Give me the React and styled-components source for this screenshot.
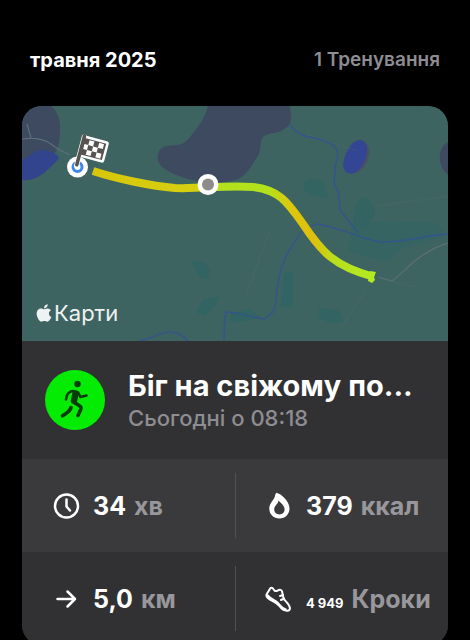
import styled, { createGlobalStyle } from 'styled-components';
import { FaApple } from 'react-icons/fa';

const GlobalStyle = createGlobalStyle`
    * {
        box-sizing: border-box;
    }
    body {
        margin: 0;
        background: #000;
        color: #fff;
        font-family: 'Inter', sans-serif;
        scrollbar-width: none;
    }
`;

const ClockIcon = () => (
    <Icon viewBox="0 0 28 28">
        <circle cx="14.5" cy="14" r="11.5" />
        <path d="M14.500 7.500v7l3.500 4" />
    </Icon>
);

const DropIcon = () => (
    <Icon viewBox="0 0 28 28">
        <path
            fill="#fff"
            fillRule="evenodd"
            stroke="none"
            d="M11.5.8C16 1.800 24.500 9 24.500 16.500 24.500 22.500 20 26.500 14.400 26.500S4.300 22.500 4.300 16.800C4.300 12 7.300 9.500 9 6.500c1.200-2 1-4.500 2.500-5.700ZM13.500 8.500c0 3-4.300 5.200-4.300 8.800 0 3 2.100 5.200 5.200 5.200s5.200-2.200 5.200-5.200C19.600 13.500 16 11.500 13.500 8.500Z"
        />
    </Icon>
);

const ArrowIcon = () => (
    <Icon viewBox="0 0 28 28">
        <path d="M5.5 14H23M15.5 6.5 23 14l-7.5 7.500" />
    </Icon>
);

const ShoeIcon = () => (
    <Icon viewBox="0 0 28 28">
        <path
            strokeWidth="2"
            d="M5.500 3c1.500-1 2.500.3 3.500 2 .8 1.300 2.300 1.300 4 .3 1.700-1 3.500-.5 4 1l1.200 5.500c.5 3.500 3.600 4.800 5.400 8 2 3.500 1.700 5.700-.9 5.900-3.700.3-6-1.400-8-4.400-2.200-3.300-5-4.300-9-6.300-3.500-1.700-4.700-3.300-4.200-5.500Z"
        />
        <path strokeWidth="2.5" d="M2.500 10.500c2 3 6 4 9 6.500s4.500 6.500 9 7.500" />
        <path strokeWidth="2" d="M18 10l-3 1M19 13.500 16 15" />
    </Icon>
);

const RunIcon = () => (
    <RunSvg viewBox="0 0 60 60">
        <circle cx="32.5" cy="14" r="3.2" fill="#063d06" stroke="none" />
        <path strokeWidth="2.6" d="M29 21c-4 0-7.500 2.500-8 8.500" />
        <path strokeWidth="6.4" d="M30.500 23.500 29 31" />
        <path strokeWidth="2.6" d="m33 22.500 2.500 4.500 6-1.500" />
        <path strokeWidth="3.6" d="m29.500 32.500 6 4c1 1 .8 2-2.500 9" />
        <path strokeWidth="3.6" d="M26 37.500c-1 4-3 4.500-8.500 8.200" />
    </RunSvg>
);

const RouteMap = () => (
    <MapSvg viewBox="0 0 426 235" preserveAspectRatio="xMidYMid slice">
        <defs>
            <linearGradient id="route" gradientUnits="userSpaceOnUse" x1="71" y1="0" x2="353" y2="0">
                <stop offset="0" stopColor="#d8c60a" />
                <stop offset="0.36" stopColor="#d6d010" />
                <stop offset="0.45" stopColor="#b4e01c" />
                <stop offset="0.62" stopColor="#b2e21c" />
                <stop offset="0.7" stopColor="#dcc80c" />
                <stop offset="0.78" stopColor="#dfbf0c" />
                <stop offset="0.86" stopColor="#b8e01c" />
                <stop offset="1" stopColor="#b4ea22" />
            </linearGradient>
        </defs>
        <rect width="426" height="235" fill="#3e6461" />

        {/* parks */}
        <g fill="#3d4a60">
            <path d="M0 0h29c6 5 9 12 9 22 0 12-1 20-6 26L0 58Z" />
            <path d="M186 0c-3 12-9 20-15 27-5 7-8 11-16 12-9 1-17 0-19 9-2 10 5 15 16 20 18 8 45 12 64 5 10-5 13-13 20-23 4-7 1-16 6-20 7-4 15-2 20-7 9-4 7-14 6-23Z" />
            <path d="M426 36c-7 4-9 12-8 19 1 6 4 11 8 14Z" />
        </g>
        <g fill="#316462">
            <path d="M284 74c8-3 17-1 19 4l4 15-18-4c-7-3-10-9-5-15Z" opacity=".7" />
            <path d="M339 92c9-3 13 7 14 17l-10 13-12-5c0-9 2-19 8-25Z" opacity=".7" />
            <path d="M330 118l36-3 50 2 8 13-45 13-13 13-40-10Z" opacity=".6" />
            <path d="M262 166h9v35h-12ZM297 202l21 3 4 11-14 1-12-6ZM169 156l12-1 7 9-2 9-9-2ZM182 193l16-3-5 10-11 10-8-4Z" />
            <path d="M208 208l20-5 10 9-20 4h-10Z" />
        </g>

        {/* lakes and rivers */}
        <path fill="#32448e" d="M0 54c7-2 11-9 18-10 9 0 17 3 19 8-5 7-10 10-15 15-7 5-14 8-22 7Z" />
        <path fill="#4b4f65" d="M335 34c9 0 13 6 12 14-1 12-9 19-18 20l-4-2Z" />
        <path fill="#324694" d="M334 35c7-3 11 2 11 8 0 9-6 22-13 24-6 2-10-1-11-8 1-9 6-21 13-24Z" />
        <g fill="none" stroke="#34558b" strokeWidth="1.5">
            <path d="M268 19c4 5 9 9 15 11 11 3 28 4 32 14 3 8-2 10-2 19 0 7-2 13 0 17 8 11 2 19 6 25l17 22" />
            <path d="M426 128c-22 1-42 8-65 8-19-1-42-15-66-18-9 2-15 6-20 14-5 9-9 12-13 23-6 13-7 28-8 40-1 9-3 13-12 18-10-1-22-6-38-7-2 11-2 19-2 29" />
            <path d="M118 235c14-3 20-9 30-9 9 0 13 4 18 9" />
        </g>

        {/* roads */}
        <g fill="none" stroke="#5c6f78" strokeWidth="1.2">
            <path d="M0 33c14-2 22 0 29 5 6 5 12 8 19 11M5 18l4 14M356 171l14 4c14-10 26-29 56-38" />
            <path d="M248 125l-25 66M344 184l-23 35M284 28l52 17M371 176l23 5M356 100l70-10" opacity=".25" />
        </g>

        <path
            d="M71 65c24 8 59 15 82 17 26 1 50-3 78-1 27 3 35 16 50 37 18 27 30 42 71 53"
            fill="none"
            stroke="url(#route)"
            strokeWidth="8"
        />
        <path fill="#b4ea22" d="m348 165 6 1-2 5 1 3-3 3-4-2Z" />
        <circle cx="186" cy="78.5" r="10.5" fill="#fff" />
        <circle cx="186" cy="78.5" r="6" fill="#8d8c8a" />

        {/* finish flag */}
        <circle cx="55.5" cy="61" r="10.5" fill="#fff" />
        <circle cx="55.5" cy="61" r="4.5" fill="#fff" stroke="#3d88e8" strokeWidth="3" />
        <g transform="translate(63 32) rotate(15)">
            <path
                d="M-1-1v30M0 0h22v17H0Z"
                fill="#fff"
                stroke="#fff"
                strokeWidth="5"
                strokeLinejoin="round"
                strokeLinecap="round"
            />
            <path d="M0 0h22v17H0Z" fill="#565351" />
            <path fill="#fff" d="M5 1h5v5H5zM15 1h5v5h-5zM1 6h4v5H1zM10 6h5v5h-5zM5 11h5v5H5zM15 11h5v5h-5z" />
            <path d="M-1-2v30" stroke="#565351" strokeWidth="3.5" strokeLinecap="round" />
        </g>
    </MapSvg>
);

const stats = [
    [
        { icon: <ClockIcon />, value: '34', unit: 'хв' },
        { icon: <DropIcon />, value: '379', unit: 'ккал' },
    ],
    [
        { icon: <ArrowIcon />, value: '5,0', unit: 'км' },
        { icon: <ShoeIcon />, value: '4 949', unit: 'Кроки', small: true },
    ],
];

export default function App() {
    return (
        <>
            <GlobalStyle />
            <Page>
                <MonthBar>
                    <Month>травня 2025</Month>
                    <Count>1 Тренування</Count>
                </MonthBar>
                <Card>
                    <MapWrapp>
                        <RouteMap />
                        <MapBrand>
                            <FaApple size={20} />
                            Карти
                        </MapBrand>
                    </MapWrapp>
                    <Workout>
                        <RunIcon />
                        <WorkoutInfo>
                            <Title>Біг на свіжому по...</Title>
                            <Time>Сьогодні о 08:18</Time>
                        </WorkoutInfo>
                    </Workout>
                    {stats.map((row, index) => (
                        <StatRow key={index} $light={index % 2 === 0}>
                            {row.map((item) => (
                                <Stat key={item.unit}>
                                    {item.icon}
                                    <StatText>
                                        <Value $small={item.small}>{item.value}</Value>
                                        <Unit>{item.unit}</Unit>
                                    </StatText>
                                </Stat>
                            ))}
                        </StatRow>
                    ))}
                </Card>
            </Page>
        </>
    );
}

const Page = styled.main`
    padding: 48px 22px 0;
`;
const MonthBar = styled.header`
    display: flex;
    justify-content: space-between;
    padding: 0 8px;
    height: 58px;
    line-height: 24px;
`;
const Month = styled.h1`
    margin: 0;
    font-size: 20px;
    font-weight: 700;
`;
const Count = styled.span`
    color: #8e8d92;
    font-size: 19px;
    font-weight: 600;
`;
const Card = styled.section`
    border-radius: 20px;
    overflow: hidden;
    background: #313133;
`;
const MapWrapp = styled.div`
    position: relative;
`;
const MapSvg = styled.svg`
    display: block;
    width: 100%;
`;
const MapBrand = styled.div`
    position: absolute;
    left: 12px;
    bottom: 14px;
    display: flex;
    align-items: center;
    color: #eef2f2;
    font-size: 22px;
    line-height: 28px;
`;
const Workout = styled.div`
    display: flex;
    align-items: center;
    gap: 23px;
    height: 118px;
    padding: 0 23px;
`;
const RunSvg = styled.svg`
    flex: none;
    width: 60px;
    height: 60px;
    border-radius: 50%;
    background: #04ec04;
    fill: none;
    stroke: #063d06;
    stroke-linecap: round;
    stroke-linejoin: round;
`;
const WorkoutInfo = styled.div`
    min-width: 0;
`;
const Title = styled.h2`
    margin: 0;
    font-size: 29px;
    line-height: 36px;
    font-weight: 700;
    white-space: nowrap;
`;
const Time = styled.p`
    margin: 0;
    color: #8e8d92;
    font-size: 22px;
    line-height: 28px;
    font-weight: 500;
`;
const StatRow = styled.div`
    display: grid;
    grid-template-columns: 1fr 1fr;
    height: 93px;
    padding: 14px 0;
    background: ${(props) => (props.$light ? '#3a3a3c' : '#313133')};
`;
const Stat = styled.div`
    display: flex;
    align-items: center;
    gap: 13px;
    min-width: 0;
    padding-left: 30px;
    & + & {
        padding-left: 29px;
        border-left: 1px solid #515153;
    }
`;
const Icon = styled.svg`
    flex: none;
    width: 28px;
    height: 28px;
    fill: none;
    stroke: #fff;
    stroke-width: 2.5;
    stroke-linecap: round;
    stroke-linejoin: round;
`;
const StatText = styled.div`
    display: flex;
    align-items: baseline;
    gap: 8px;
    line-height: 32px;
    white-space: nowrap;
`;
const Value = styled.span`
    font-size: ${(props) => (props.$small ? '13px' : '25px')};
    line-height: 24px;
    font-weight: 700;
`;
const Unit = styled.span`
    color: #98979c;
    font-size: 25px;
    font-weight: 700;
`;
